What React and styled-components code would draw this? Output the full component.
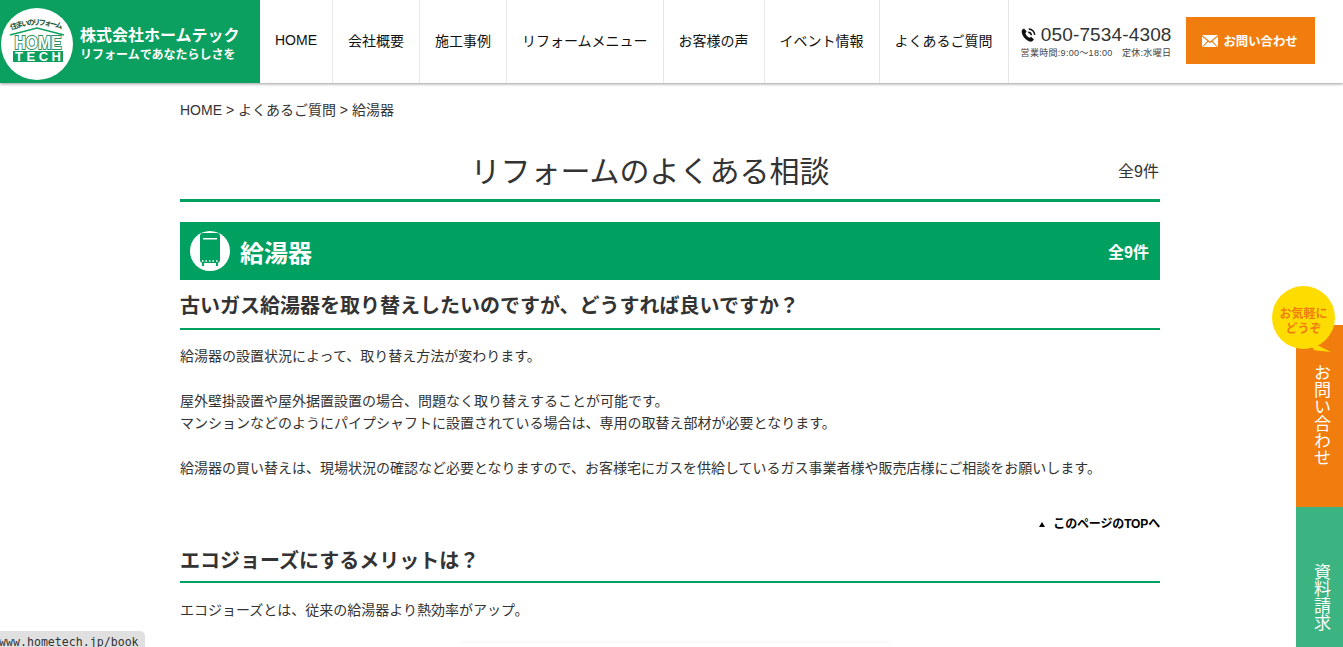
import React from "react";
import styled, {createGlobalStyle} from "styled-components";

const GREEN = "#00a160";
const LOGO_GREEN = "#0ba05f";
const ORANGE = "#f27d0f";
const TEXT = "#333";

const GlobalStyle = createGlobalStyle`
  html, body {
    margin: 0;
    padding: 0;
    height: 647px;
    overflow: hidden;
    background: #fff;
  }
  body {
    font-family: "Liberation Sans", "Noto Sans CJK JP", sans-serif;
    color: ${TEXT};
  }
`;

const Header = styled.header`
  display: flex;
  align-items: stretch;
  height: 83px;
  background: #fff;
  box-shadow: 0 1px 3px rgba(0, 0, 0, 0.4);
`;

const Brand = styled.a`
  display: flex;
  align-items: center;
  gap: 6px;
  width: 260px;
  padding-top: 5px;
  box-sizing: border-box;
  background: ${LOGO_GREEN};
  color: #fff;
`;

const BrandText = styled.div`
  display: flex;
  flex-direction: column;
  gap: 1px;
`;

const BrandName = styled.span`
  font-size: 16px;
  line-height: 20px;
  font-weight: 700;
  white-space: nowrap;
`;

const BrandCopy = styled.span`
  font-size: 12px;
  line-height: 16px;
  font-weight: 700;
  white-space: nowrap;
`;

const Nav = styled.nav`
  display: flex;
`;

const NavItem = styled.a`
  display: flex;
  align-items: center;
  padding: 0 15px 3px;
  font-size: 14px;
  color: #111;
  white-space: nowrap;
  border-right: 1px solid #e8e8e8;
`;

const Contact = styled.div`
  display: flex;
  flex-direction: column;
  justify-content: center;
  width: 151px;
  margin-left: 12px;
  padding-bottom: 2px;
`;

const Tel = styled.div`
  display: flex;
  align-items: center;
  gap: 5px;
  font-size: 19px;
  line-height: 24px;
  letter-spacing: 0.15px;
  color: #333;
  white-space: nowrap;
`;

const Hours = styled.div`
  font-size: 9px;
  line-height: 12px;
  letter-spacing: 0.3px;
  color: #444;
  white-space: pre;
`;

const MailButton = styled.a`
  display: flex;
  align-items: center;
  justify-content: center;
  gap: 5px;
  align-self: center;
  width: 129px;
  height: 47px;
  margin: 0 0 2px 14px;
  background: ${ORANGE};
  color: #fff;
  font-size: 12.4px;
  font-weight: 700;
`;

const Main = styled.main`
  width: 980px;
  margin-left: 180px;
`;

const Breadcrumb = styled.div`
  padding-top: 17px;
  font-size: 14px;
  line-height: 20px;
`;

const TitleRow = styled.div`
  position: relative;
  height: 49px;
  margin-top: 21px;
  padding: 9px 40px 0 0;
  border-bottom: 3px solid ${GREEN};
  text-align: center;
`;

const Title = styled.h1`
  margin: 0;
  font-size: 30px;
  line-height: 44px;
  font-weight: 400;
`;

const TitleCount = styled.span`
  position: absolute;
  top: 19px;
  right: 1px;
  font-size: 16px;
  line-height: 24px;
`;

const SectionBar = styled.div`
  display: flex;
  align-items: center;
  justify-content: space-between;
  height: 58px;
  margin-top: 20px;
  padding: 0 11px 0 10px;
  background: ${GREEN};
  color: #fff;
  font-weight: 700;
`;

const SectionName = styled.div`
  display: flex;
  align-items: center;
  gap: 10px;
  font-size: 24px;
`;

const SectionCount = styled.span`
  font-size: 16px;
`;

const Question = styled.h3`
  margin: ${(p) => p.$top}px 0 0;
  padding: 1px 0 ${(p) => p.$bottom}px;
  border-bottom: 2px solid ${GREEN};
  font-size: 20px;
  line-height: 30px;
  font-weight: 700;
`;

const Answer = styled.p`
  margin: ${(p) => p.$top}px 0 0;
  font-size: 14px;
  line-height: 22.4px;
  white-space: pre-line;
`;

const TopLink = styled.a`
  display: flex;
  align-items: center;
  justify-content: flex-end;
  gap: 8px;
  margin-top: 36px;
  font-size: 12px;
  line-height: 18px;
  font-weight: 700;
  letter-spacing: -0.15px;
  color: #000;
`;

const TopArrow = styled.span`
  width: 0;
  height: 0;
  border-left: 3px solid transparent;
  border-right: 3px solid transparent;
  border-bottom: 5px solid #000;
`;

const Figure = styled.div`
  width: 430px;
  height: 200px;
  margin: 21px 0 0 280px;
  background: #fff;
  box-shadow: 0 -2px 4px rgba(0, 0, 0, 0.03);
`;

const SideDock = styled.aside`
  position: fixed;
  top: 325px;
  right: 0;
  width: 47px;
  display: flex;
  flex-direction: column;
`;

const SideTab = styled.a`
  display: flex;
  align-items: center;
  box-sizing: border-box;
  height: ${(p) => p.$height}px;
  padding: ${(p) => p.$pad}px 0 0 1px;
  background: ${(p) => p.$bg};
  color: #fff;
  font-size: 17px;
  line-height: 18px;
  writing-mode: vertical-rl;
`;

const Bubble = styled.div`
  position: fixed;
  top: 286px;
  left: 1272px;
  width: 63px;
  height: 63px;
  box-sizing: border-box;
  padding-top: 9px;
  display: flex;
  align-items: center;
  justify-content: center;
  border-radius: 50%;
  background: #ffdc00;
  color: ${ORANGE};
  font-size: 12px;
  line-height: 15px;
  font-weight: 700;
  text-align: center;

  &::after {
    content: "";
    position: absolute;
    right: 4px;
    bottom: -3px;
    width: 24px;
    height: 12px;
    background: #ffdc00;
    clip-path: polygon(0 0, 100% 100%, 30% 85%);
  }
`;

const StatusBar = styled.div`
  position: fixed;
  left: 0;
  bottom: 0;
  width: 145px;
  height: 16px;
  overflow: hidden;
  background: #e0e0e0;
  border-top-right-radius: 5px;
  font-family: "DejaVu Sans Mono", monospace;
  font-size: 11.6px;
  line-height: 22px;
  color: #333;
  white-space: nowrap;
  text-indent: -1px;
`;

const Logo = () => (
  <svg width="74" height="74" viewBox="0 0 74 74">
    <circle cx="37" cy="37" r="36" fill="#fff" />
    <path id="logo-arc" d="M11 23 Q37 13 64 23" fill="none" />
    <text fontSize="7.5" fontWeight="700" fill="#1c5a3c">
      <textPath href="#logo-arc" textLength="52">住まいのリフォーム</textPath>
    </text>
    <path d="M10 28 L37 21 L64 28" fill="none" stroke={LOGO_GREEN} strokeWidth="1.5" />
    <text x="38" y="42" textAnchor="middle" fontFamily="Liberation Sans" fontSize="19" fontWeight="700" fill="#fff" stroke="#2c8f63" strokeWidth="2" paintOrder="stroke" textLength="47" lengthAdjust="spacingAndGlyphs">
      HOME
    </text>
    <rect x="13" y="44" width="50" height="11" fill={LOGO_GREEN} />
    <text x="38" y="54" textAnchor="middle" fontFamily="Liberation Sans" fontSize="13" fontWeight="700" fill="#fff" textLength="46">
      TECH
    </text>
  </svg>
);

const HeaterIcon = () => (
  <svg width="40" height="40" viewBox="0 0 40 40">
    <circle cx="20" cy="20" r="20" fill="#fff" />
    <rect x="10" y="2" width="20" height="30" rx="3" fill={GREEN} />
    <rect x="13" y="7" width="14" height="1.5" fill="#fff" />
    <path d="M12 30h16" stroke="#fff" strokeWidth="1.5" strokeDasharray="1.5 2" />
    <path d="M13 32v3M27 32v3" stroke={GREEN} strokeWidth="2" />
  </svg>
);

const PhoneIcon = () => (
  <svg width="16" height="16" viewBox="0 0 16 16">
    <path d="M3.2 1.2 6 4.4 4.6 6.2c.7 2 2.4 3.8 4.5 4.8l1.6-1.2 3 2.9-1.5 1.7c-.7.6-1.7.8-2.9.5C5 13.600 1.200 9 .7 4.800c-.1-1 .2-1.900.8-2.500z" fill="#111" />
    <path d="M7.600 5a3.400 3.400 0 0 1 3.300 3.300M8.200 1.600a6.600 6.600 0 0 1 6.300 6.300" fill="none" stroke="#111" strokeWidth="1.600" />
  </svg>
);

const MailIcon = () => (
  <svg width="16" height="12" viewBox="0 0 16 12">
    <path d="M0 0h16L8 6.500z" fill="#fff" />
    <path d="M0 1.600V12l5.400-6zM16 1.600V12l-5.400-6zM6.300 6.800 8 8.200l1.700-1.400L15 12H1z" fill="#fff" />
  </svg>
);

const navItems = [
  "HOME",
  "会社概要",
  "施工事例",
  "リフォームメニュー",
  "お客様の声",
  "イベント情報",
  "よくあるご質問",
];

const App = () => {
  return (
    <>
      <GlobalStyle />
      <Header>
        <Brand>
          <Logo />
          <BrandText>
            <BrandName>株式会社ホームテック</BrandName>
            <BrandCopy>リフォームであなたらしさを</BrandCopy>
          </BrandText>
        </Brand>
        <Nav>
          {navItems.map((item) => (
            <NavItem key={item}>{item}</NavItem>
          ))}
        </Nav>
        <Contact>
          <Tel>
            <PhoneIcon />
            050-7534-4308
          </Tel>
          <Hours>{"営業時間:9:00〜18:00　定休:水曜日"}</Hours>
        </Contact>
        <MailButton>
          <MailIcon />
          お問い合わせ
        </MailButton>
      </Header>
      <Main>
        <Breadcrumb>HOME &gt; よくあるご質問 &gt; 給湯器</Breadcrumb>
        <TitleRow>
          <Title>リフォームのよくある相談</Title>
          <TitleCount>全9件</TitleCount>
        </TitleRow>
        <SectionBar>
          <SectionName>
            <HeaterIcon />
            給湯器
          </SectionName>
          <SectionCount>全9件</SectionCount>
        </SectionBar>
        <Question $top={10} $bottom={7}>古いガス給湯器を取り替えしたいのですが、どうすれば良いですか？</Question>
        <Answer $top={15}>
          {`給湯器の設置状況によって、取り替え方法が変わります。

          屋外壁掛設置や屋外据置設置の場合、問題なく取り替えすることが可能です。
          マンションなどのようにパイプシャフトに設置されている場合は、専用の取替え部材が必要となります。

          給湯器の買い替えは、現場状況の確認など必要となりますので、お客様宅にガスを供給しているガス事業者様や販売店様にご相談をお願いします。`}
        </Answer>
        <TopLink>
          <TopArrow />
          このページのTOPへ
        </TopLink>
        <Question $top={12} $bottom={5}>エコジョーズにするメリットは？</Question>
        <Answer $top={16}>エコジョーズとは、従来の給湯器より熱効率がアップ。</Answer>
        <Figure />
      </Main>
      <SideDock>
        <SideTab $height={182} $bg={ORANGE} $pad={39}>お問い合わせ</SideTab>
        <SideTab $height={140} $bg="#3cb482" $pad={56}>資料請求</SideTab>
      </SideDock>
      <Bubble>
        お気軽に
        <br />
        どうぞ
      </Bubble>
      <StatusBar>www.hometech.jp/book</StatusBar>
    </>
  );
};

export default App;
